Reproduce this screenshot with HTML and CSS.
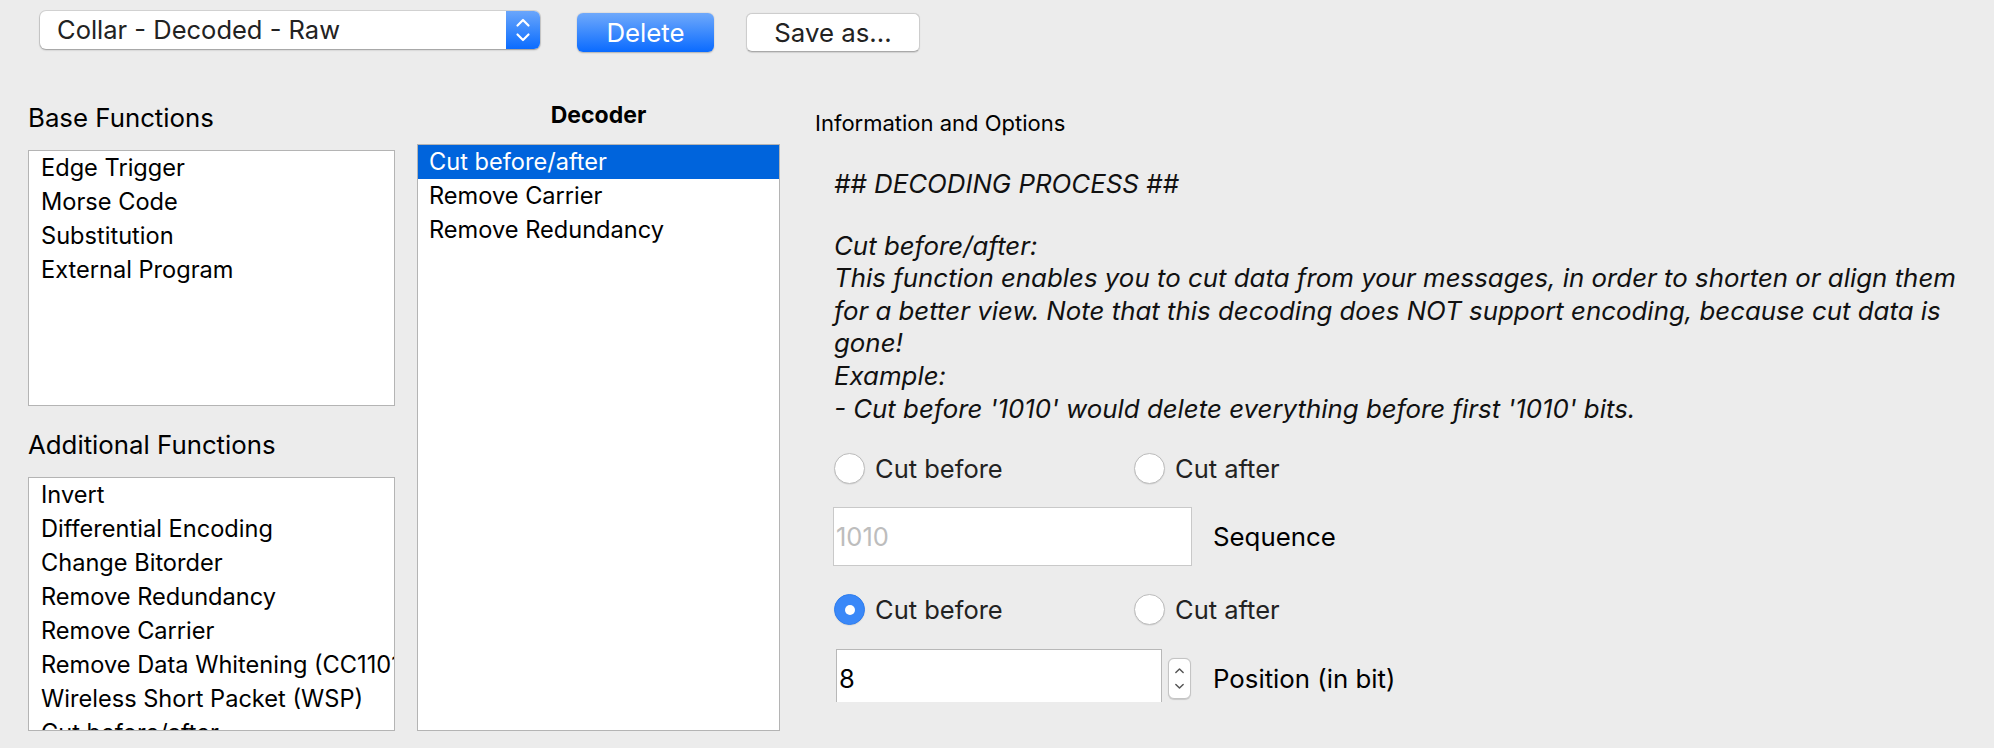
FILE: index.html
```html
<!DOCTYPE html>
<html>
<head>
<meta charset="utf-8">
<link rel="stylesheet" href="styles.css">
</head>
<body>
<div class="toolbar">
  <div class="combo">
    <span class="combo-text">Collar - Decoded - Raw</span>
    <span class="combo-step">
      <svg width="16" height="26" viewBox="0 0 16 26"><path d="M2.5 8.5 L8 3 L13.5 8.5" fill="none" stroke="#fff" stroke-width="2.2" stroke-linecap="round" stroke-linejoin="round"/><path d="M2.5 17.5 L8 23 L13.5 17.5" fill="none" stroke="#fff" stroke-width="2.2" stroke-linecap="round" stroke-linejoin="round"/></svg>
    </span>
  </div>
  <button class="btn btn-primary">Delete</button>
  <button class="btn btn-secondary">Save as...</button>
</div>
<div class="main">
  <div class="col-left">
    <div class="group-label">Base Functions</div>
    <ul class="list list-base">
      <li>Edge Trigger</li>
      <li>Morse Code</li>
      <li>Substitution</li>
      <li>External Program</li>
    </ul>
    <div class="group-label label-additional">Additional Functions</div>
    <ul class="list list-add">
      <li>Invert</li>
      <li>Differential Encoding</li>
      <li>Change Bitorder</li>
      <li>Remove Redundancy</li>
      <li>Remove Carrier</li>
      <li>Remove Data Whitening (CC1101)</li>
      <li>Wireless Short Packet (WSP)</li>
      <li>Cut before/after</li>
    </ul>
  </div>
  <div class="col-mid">
    <div class="decoder-label">Decoder</div>
    <ul class="list list-decoder">
      <li class="selected">Cut before/after</li>
      <li>Remove Carrier</li>
      <li>Remove Redundancy</li>
    </ul>
  </div>
  <div class="col-right">
    <div class="info-label">Information and Options</div>
    <div class="info-scroll">
      <p class="info-line info-head">## DECODING PROCESS ##</p>
      <p class="info-line info-body">Cut before/after:<br>This function enables you to cut data from your messages, in order to shorten or align them<br>for a better view. Note that this decoding does NOT support encoding, because cut data is<br>gone!<br>Example:<br>- Cut before '1010' would delete everything before first '1010' bits.</p>

      <div class="radio-row row-first">
        <span class="radio"><span class="radio-circle"></span><span class="radio-text">Cut before</span></span>
        <span class="radio"><span class="radio-circle"></span><span class="radio-text">Cut after</span></span>
      </div>
      <div class="field-row row-seq">
        <div class="input input-seq"><span class="placeholder">1010</span></div>
        <span class="field-label">Sequence</span>
      </div>
      <div class="radio-row row-second">
        <span class="radio"><span class="radio-circle checked"></span><span class="radio-text">Cut before</span></span>
        <span class="radio"><span class="radio-circle"></span><span class="radio-text">Cut after</span></span>
      </div>
      <div class="field-row row-pos">
        <div class="input input-pos"><span class="value">8</span></div>
        <span class="spin">
          <svg width="23" height="41" viewBox="0 0 23 41"><path d="M7.5 14 L11.5 10 L15.5 14" fill="none" stroke="#555" stroke-width="1.6" stroke-linecap="round" stroke-linejoin="round"/><path d="M7.5 27 L11.5 31 L15.5 27" fill="none" stroke="#555" stroke-width="1.6" stroke-linecap="round" stroke-linejoin="round"/></svg>
        </span>
        <span class="field-label label-pos">Position (in bit)</span>
      </div>
    </div>
  </div>
</div>
</body>
</html>
```

FILE: styles.css
```css
html, body {
  margin: 0;
  padding: 0;
}
body {
  background: #ececec;
  font-family: Inter, "Liberation Sans", "Noto Sans", sans-serif;
  color: #000;
  width: 1994px;
  height: 748px;
  overflow: hidden;
}

/* toolbar */
.toolbar {
  display: flex;
  align-items: flex-start;
  height: 60px;
  box-sizing: border-box;
  padding: 11px 0 0 40px;
}
.combo {
  display: flex;
  width: 500px;
  height: 38px;
  background: #fff;
  border-radius: 6px;
  box-shadow: 0 0 0 1px rgba(0, 0, 0, 0.10), 0 1px 2px rgba(0, 0, 0, 0.28);
  overflow: hidden;
}
.combo-text {
  flex: 1;
  padding-left: 17px;
  font-size: 25.5px;
  line-height: 38px;
  color: #222;
  white-space: nowrap;
}
.combo-step {
  width: 34px;
  background: linear-gradient(#6aa6fb, #0a6cff);
  display: flex;
  align-items: center;
  justify-content: center;
}
.btn {
  font-family: inherit;
  height: 39px;
  margin-top: 2px;
  border-radius: 6px;
  font-size: 25.8px;
  padding: 0;
  box-sizing: border-box;
}
.btn-primary {
  width: 137px;
  margin-left: 37px;
  color: #fff;
  border: none;
  background: linear-gradient(#6fa9fb, #0a6bff);
  box-shadow: 0 0.5px 1.5px rgba(0, 0, 0, 0.25);
}
.btn-secondary {
  width: 174px;
  margin-left: 32px;
  color: #222;
  background: #fff;
  border: 1px solid #cdcdcd;
  border-bottom-color: #a9a9a9;
  box-shadow: 0 0.5px 1px rgba(0, 0, 0, 0.12);
}

/* main area */
.main {
  display: flex;
  padding-left: 28px;
  height: 688px;
}
.col-left {
  width: 367px;
  display: flex;
  flex-direction: column;
}
.group-label {
  font-size: 25.8px;
  line-height: 34px;
  height: 34px;
  margin-top: 41px;
  white-space: nowrap;
}
.label-additional {
  margin-top: 22px;
}
.list {
  list-style: none;
  margin: 15px 0 0;
  padding: 0;
  background: #fff;
  border: 1px solid #b4b4b4;
  box-sizing: border-box;
  overflow: hidden;
}
.list li {
  height: 34px;
  line-height: 34px;
  padding-left: 12px;
  font-size: 23.6px;
  white-space: nowrap;
}
.list-base {
  height: 256px;
}
.list-add {
  height: 254px;
}
.col-mid {
  width: 363px;
  margin-left: 22px;
  display: flex;
  flex-direction: column;
}
.decoder-label {
  font-weight: 700;
  font-size: 23px;
  line-height: 30px;
  text-align: center;
  margin-top: 40px;
}
.list-decoder {
  height: 587px;
  margin-top: 14px;
}
.list-decoder li {
  padding-left: 11px;
}
.list li.selected {
  background: #0064dc;
  color: #fff;
}

/* right */
.col-right {
  margin-left: 35px;
  flex: 1;
  display: flex;
  flex-direction: column;
}
.info-label {
  font-size: 22px;
  line-height: 30px;
  margin-top: 48px;
  white-space: nowrap;
}
.info-scroll {
  height: 564px;
  overflow: hidden;
  padding-left: 19px;
}
.info-line {
  margin: 0;
  font-style: italic;
  font-size: 25.85px;
  line-height: 32.6px;
  white-space: nowrap;
  color: #111;
}
.info-head {
  padding-top: 30px;
}
.info-body {
  margin-top: 29px;
}

.radio-row {
  display: grid;
  grid-template-columns: 300px 300px;
  height: 31px;
}
.row-first {
  margin-top: 28px;
}
.row-second {
  margin-top: 28px;
}
.radio {
  display: flex;
  align-items: center;
}
.radio-circle {
  width: 31px;
  height: 31px;
  box-sizing: border-box;
  border-radius: 50%;
  background: #fff;
  border: 1px solid #bdbdbd;
  box-shadow: 0 0.5px 1px rgba(0, 0, 0, 0.12);
  display: flex;
  align-items: center;
  justify-content: center;
}
.radio-circle.checked {
  background: #3a88f8;
  border-color: #2f7ef0;
}
.radio-circle.checked::after {
  content: "";
  width: 10px;
  height: 10px;
  border-radius: 50%;
  background: #fff;
}
.radio-text {
  margin-left: 10px;
  font-size: 25.5px;
  color: #222;
  white-space: nowrap;
}

.field-row {
  display: flex;
  align-items: center;
}
.row-seq {
  margin-top: 23px;
}
.row-pos {
  margin-top: 24px;
  align-items: flex-start;
}
.input {
  height: 59px;
  box-sizing: border-box;
  background: #fff;
  border: 1px solid #c9c9c9;
  display: flex;
  align-items: center;
  font-size: 25.5px;
}
.input-seq {
  width: 359px;
  margin-left: -1px;
}
.placeholder {
  padding-left: 2px;
  color: #bdbdbd;
}
.input-pos {
  width: 326px;
  margin-left: 2px;
  border-color: #b8b8b8;
}
.value {
  padding-left: 2px;
  color: #000;
}
.spin {
  width: 23px;
  height: 41px;
  margin-left: 6px;
  margin-top: 9px;
  box-sizing: border-box;
  background: #fff;
  border: 1px solid #c4c4c4;
  border-radius: 6px;
  box-shadow: 0 0.5px 1px rgba(0, 0, 0, 0.15);
  display: flex;
  align-items: center;
  justify-content: center;
  overflow: hidden;
}
.field-label {
  margin-left: 21px;
  font-size: 25.8px;
  white-space: nowrap;
}
.label-pos {
  margin-left: 22px;
  line-height: 59px;
}
```
